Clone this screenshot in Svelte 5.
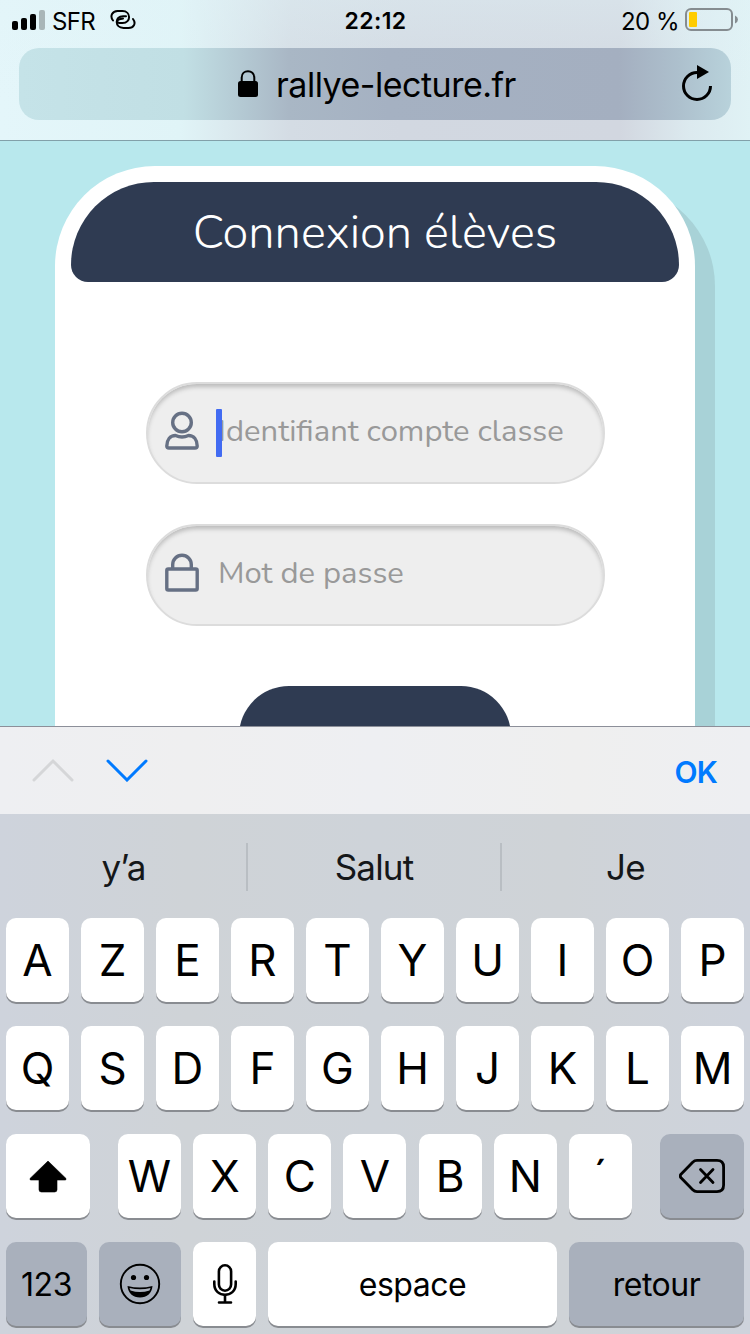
<script>
  const firstRow = ["A", "Z", "E", "R", "T", "Y", "U", "I", "O", "P"];
  const secondRow = ["Q", "S", "D", "F", "G", "H", "J", "K", "L", "M"];
  const thirdRow = ["W", "X", "C", "V", "B", "N"];
  const suggestions = ["y’a", "Salut", "Je"];
  const signal = [9, 12, 16, 20];
</script>

<div class="phone">
  <header>
    <div class="status">
      <div class="carrier">
        <div class="signal">
          {#each signal as height, i}
            <i class:off={i === 3} style="height: {height}px"></i>
          {/each}
        </div>
        <span class="operator">SFR</span>
        <svg class="link" width="26" height="20" viewBox="0 0 26 20" fill="none" stroke="#000" stroke-width="2" stroke-linecap="round">
          <path d="M3 10.5 C-0.5 6 2.5 1 7.5 1 H12.5 C21 1 21.5 13 12.5 13 H9.5 C6.5 13 6.5 9.8 9.5 9.2 L13 8.6" />
          <path d="M23 9 C26.5 13.5 23.5 18 18.5 18 H13.500 C4.500 18 4.500 6.200 13 6.200 H16" />
        </svg>
      </div>
      <div class="time">22:12</div>
      <div class="power">
        <span>20 %</span>
        <svg width="54" height="24" viewBox="0 0 54 24">
          <rect x="1" y="1" width="46" height="21" rx="5" fill="none" stroke="#858c90" stroke-width="2" />
          <rect x="4" y="4" width="8" height="15" rx="1" fill="#ffcc00" />
          <path d="M50 7.500 Q53 9 53 11.500 Q53 14 50 15.500 Z" fill="#858c90" />
        </svg>
      </div>
    </div>
    <div class="address">
      <svg class="padlock" width="20" height="28" viewBox="0 0 20 28">
        <path d="M3.700 13 V7.500 C3.700 -1 16.300 -1 16.300 7.500 V13" fill="none" stroke="#000" stroke-width="2" />
        <rect x="0" y="11" width="20" height="16" rx="2.500" />
      </svg>
      <span class="url">rallye-lecture.fr</span>
      <svg class="reload" width="32" height="36" viewBox="0 0 32 36">
        <path d="M28.500 21 A13.500 13.500 0 1 1 15 7.500" fill="none" stroke="#000" stroke-width="3" />
        <path d="M15 0 L27 7 L15 14 Z" />
      </svg>
    </div>
  </header>

  <main>
    <form class="card">
      <h1><span>Connexion élèves</span></h1>
      <div class="field">
        <svg width="34" height="40" viewBox="0 0 34 40" fill="none" stroke="#667084" stroke-width="3.400">
          <circle cx="17" cy="11.500" r="9.300" />
          <path d="M10.500 24.500 Q17 27.500 23.500 24.500 C29 24.500 32.200 29 32.200 35 Q32.200 37 30 37 H4 Q1.800 37 1.800 35 C1.800 29 5 24.500 10.500 24.500 Z" stroke-linejoin="round" />
        </svg>
        <span class="placeholder user">Identifiant compte classe</span>
        <i class="caret"></i>
      </div>
      <div class="field">
        <svg width="34" height="40" viewBox="0 0 34 40" fill="none" stroke="#667084" stroke-width="3.400">
          <rect x="1.800" y="16" width="30.400" height="21" rx="1.500" />
          <path d="M7.700 16 V11.500 A9.300 9.300 0 0 1 26.300 11.500 V16" />
        </svg>
        <span class="placeholder pass">Mot de passe</span>
      </div>
      <button type="button"><span>CONNEXION</span></button>
    </form>
  </main>

  <div class="toolbar">
    <svg width="116" height="24" viewBox="0 0 116 24" fill="none" stroke-width="3" stroke-linecap="round">
      <path d="M2 22 L21 3 L40 22" stroke="#d5d6d8" />
      <path d="M76 3 L95 22 L114 3" stroke="#007aff" />
    </svg>
    <span class="ok">OK</span>
  </div>

  <section class="keyboard">
    <div class="suggestions">
      {#each suggestions as word}
        <span>{word}</span>
      {/each}
    </div>

    <div class="row ten">
      {#each firstRow as letter}<div class="key">{letter}</div>{/each}
    </div>
    <div class="row ten">
      {#each secondRow as letter}<div class="key">{letter}</div>{/each}
    </div>

    <div class="row shift-row">
      <div class="key">
        <svg width="38" height="33" viewBox="0 0 38 33">
          <path d="M19 1 L37 18.500 Q37.500 20 36 20 H28 V29.500 Q28 32 25.500 32 H12.500 Q10 32 10 29.500 V20 H2 Q0.500 20 1 18.500 Z" stroke="#000" stroke-width="0.600" stroke-linejoin="round" />
        </svg>
      </div>
      <div class="letters">
        {#each thirdRow as letter}<div class="key">{letter}</div>{/each}
        <div class="key accent">´</div>
      </div>
      <div class="key grey">
        <svg width="46" height="34" viewBox="0 0 46 34" fill="none" stroke="#000" stroke-width="2.800" stroke-linejoin="round" stroke-linecap="round">
          <path d="M18 1.400 H38 Q44.600 1.400 44.600 8 V26 Q44.600 32.600 38 32.600 H18 Q15.500 32.600 13.700 30.800 L2 18.800 Q0.500 17 2 15.200 L13.700 3.200 Q15.500 1.400 18 1.400 Z" />
          <path d="M21.500 10.500 L34 23.500 M34 10.500 L21.500 23.500" />
        </svg>
      </div>
    </div>

    <div class="row bottom-row">
      <div class="key grey small digits">123</div>
      <div class="key grey">
        <svg width="42" height="42" viewBox="0 0 42 42">
          <circle cx="21" cy="21" r="19.200" fill="none" stroke="#000" stroke-width="1.900" />
          <circle cx="14.500" cy="14.500" r="2.600" />
          <circle cx="27.500" cy="14.500" r="2.600" />
          <path d="M8.500 23 Q21 26 33.500 23 C33 30 28 34.500 21 34.500 S9 30 8.500 23 Z" />
          <path d="M10.500 25 Q21 27.500 31.500 25 L30.500 27.500 Q21 30.500 11.500 27.500 Z" fill="#a9b0bc" />
        </svg>
      </div>
      <div class="key">
        <svg width="26" height="42" viewBox="0 0 26 42" fill="none" stroke="#000" stroke-width="2.600" stroke-linecap="round">
          <rect x="6.900" y="2.300" width="12.200" height="25.400" rx="6.100" />
          <path d="M2.300 18.500 V21 C2.300 35.500 23.700 35.500 23.700 21 V18.500 M13 32 V39 M7 39.500 H19" />
        </svg>
      </div>
      <div class="key small">espace</div>
      <div class="key grey small">retour</div>
    </div>
  </section>
</div>

<style>
  :global(body) {
    margin: 0;
  }
  .phone {
    display: flex;
    flex-direction: column;
    width: 750px;
    height: 1334px;
    overflow: hidden;
    font-family: Inter, "Liberation Sans", sans-serif;
    color: #000;
  }
  svg {
    display: block;
    flex: none;
  }

  header {
    box-sizing: border-box;
    height: 141px;
    flex: none;
    border-bottom: 1px solid #82a0a9;
    background: linear-gradient(to bottom, rgba(225, 243, 247, 0.4), rgba(225, 243, 247, 0) 70%),
      linear-gradient(to right, #e4f6fa 0, #e0f4f7 180px, #d4dce4 290px, #d2d8e1 400px, #d2d7e0 620px, #dceaef 690px, #e0f2f5 750px);
  }
  .status {
    display: grid;
    grid-template-columns: 1fr auto 1fr;
    align-items: center;
    height: 40px;
    padding: 0 11px 0 12px;
    font-size: 24px;
  }
  .carrier,
  .power {
    display: flex;
    align-items: center;
  }
  .signal {
    display: flex;
    align-items: flex-end;
    gap: 3px;
    height: 20px;
  }
  .signal i {
    width: 6px;
    border-radius: 2px;
    background: #000;
  }
  .signal i.off {
    background: #a9b6b8;
  }
  .operator {
    margin: 2px 0 0 7px;
    letter-spacing: -0.6px;
  }
  .link {
    margin-left: 15px;
  }
  .time {
    padding-top: 2px;
    font-weight: 600;
    font-size: 23px;
    letter-spacing: 0.4px;
  }
  .power {
    justify-content: flex-end;
    gap: 6px;
  }
  .power span {
    padding-top: 2px;
    letter-spacing: -0.5px;
  }

  .address {
    display: flex;
    align-items: center;
    height: 72px;
    margin: 8px 19px 0;
    border-radius: 20px;
    background: linear-gradient(to right, #c5e3e8 0, #c1dfe4 165px, #a9b7c5 270px, #a5b1c2 370px, #a4afc0 600px, #adc0cd 660px, #b8d2db 712px);
  }
  .padlock {
    margin-left: 219px;
  }
  .url {
    margin-left: 18px;
    font-size: 34px;
    letter-spacing: -0.5px;
  }
  .reload {
    margin: 0 17px 2px auto;
  }

  main {
    height: 585px;
    flex: none;
    overflow: hidden;
    background: #b8e8ed;
    font-family: Nunito, "Noto Sans", sans-serif;
  }
  .card {
    box-sizing: border-box;
    width: 640px;
    height: 760px;
    margin: 25px auto 0;
    padding: 16px;
    border-radius: 100px;
    background: #fff;
    box-shadow: 20px 20px 0 #a8d2d7;
  }
  h1 {
    display: flex;
    align-items: center;
    justify-content: center;
    height: 100px;
    margin: 0 0 100px;
    border-radius: 83px 83px 17px 17px;
    background: #2f3b52;
    color: #fff;
    font-size: 47px;
    font-weight: 300;
    letter-spacing: 0;
  }
  .field {
    position: relative;
    display: flex;
    align-items: center;
    box-sizing: border-box;
    width: 459px;
    height: 102px;
    margin: 0 0 40px 75px;
    padding: 0 0 4px 17px;
    border: 2px solid #dcdcdc;
    border-radius: 51px;
    background: #eee;
    box-shadow: inset 0 4px 4px -1px #bcbcbc;
  }
  .placeholder {
    margin-left: 19px;
    color: #999;
    font-size: 31px;
    font-weight: 400;
    white-space: nowrap;
  }
  .caret {
    position: absolute;
    left: 68px;
    top: 25px;
    width: 6px;
    height: 48px;
    border-radius: 1px;
    background: #426bf2;
  }
  button {
    display: block;
    width: 272px;
    height: 100px;
    margin: 60px auto 0;
    padding: 0;
    border: 0;
    border-radius: 50px;
    background: #2f3b52;
    color: #fff;
    font: 300 27px "Noto Sans", sans-serif;
  }

  .toolbar {
    display: flex;
    align-items: center;
    justify-content: space-between;
    box-sizing: border-box;
    height: 88px;
    flex: none;
    padding: 0 33px 2px 32px;
    border-top: 1px solid #8c8f99;
    background: linear-gradient(to right, #eeeff2, #efeff0 25%, #eeeff2 50%, #efefef 77%, #eeeff2);
  }
  .ok {
    padding-top: 5px;
    color: #007aff;
    font-size: 30px;
    font-weight: 600;
    letter-spacing: -0.8px;
  }

  .keyboard {
    flex: 1;
    background: linear-gradient(to right, #ced3dc, #cfd3d7 25%, #ced3d9 50%, #cfd3d7 75%, #ced3dc);
  }
  .suggestions {
    display: grid;
    grid-template-columns: 247px 254px 1fr;
    align-items: center;
    height: 48px;
    padding: 29px 0 27px;
  }
  .suggestions span {
    display: flex;
    align-items: center;
    justify-content: center;
    height: 48px;
    color: #151719;
    font-size: 35px;
    letter-spacing: -0.8px;
  }
  .suggestions span + span {
    box-shadow: -1px 0 0 #b9bec3, inset 1px 0 0 #b9bec3;
  }
  .row {
    display: grid;
    height: 84px;
    margin: 0 6px 24px;
  }
  .ten {
    grid-template-columns: repeat(10, 63px);
    gap: 12px;
  }
  .shift-row {
    grid-template-columns: 84px 514px 84px;
    justify-content: space-between;
  }
  .letters {
    display: grid;
    grid-template-columns: repeat(7, 63px);
    justify-content: space-between;
  }
  .bottom-row {
    grid-template-columns: 81px 82px 63px 289px 175px;
    gap: 12px;
  }
  .key {
    display: flex;
    align-items: center;
    justify-content: center;
    height: 84px;
    border-radius: 10px;
    background: #fff;
    box-shadow: 0 2px 0 #898c91;
    font-size: 44px;
  }
  .grey {
    background: #a9b0bc;
  }
  .small {
    font-size: 32px;
    letter-spacing: -0.5px;
  }
</style>
